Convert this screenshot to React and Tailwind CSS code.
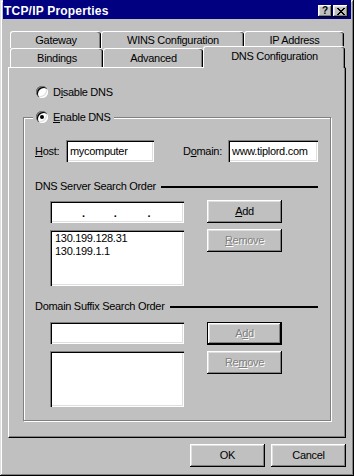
import React from 'react';

const raised = 'shadow-[inset_-1px_-1px_0_#000,inset_1px_1px_0_#fff,inset_-2px_-2px_0_#808080,inset_2px_2px_0_#dfdfdf]';
const sunken = 'shadow-[inset_1px_1px_0_#808080,inset_2px_2px_0_#000,inset_-1px_-1px_0_#fff,inset_-2px_-2px_0_#dfdfdf]';
const grayed = 'text-[#808080] [text-shadow:1px_1px_0_#fff]';

const closeGlyph = ['11000011', '01100110', '00111100', '00011000', '00111100', '01100110', '11000011'];

function CloseGlyph() {
  return (
    <svg width="8" height="7" viewBox="0 0 8 7" shapeRendering="crispEdges">
      {closeGlyph.map((row, y) =>
        row.split('').map((c, x) => (c === '1' ? <rect key={`${x}-${y}`} x={x} y={y} width="1" height="1" fill="#000" /> : null))
      )}
    </svg>
  );
}

function Radio({ checked }) {
  return (
    <span className={`flex items-center justify-center w-[12px] h-[12px] shrink-0 rounded-full bg-white ${sunken}`}>
      {checked && <span className="w-[4px] h-[4px] rounded-full bg-black" />}
    </span>
  );
}

function Button({ children, disabled, isDefault, className = '' }) {
  return (
    <div
      className={`flex items-center justify-center w-[75px] h-[23px] shrink-0 bg-[#c0c0c0] ${raised} ${isDefault ? 'border border-black' : ''} ${disabled ? grayed : 'text-black'} ${className}`}
    >
      {children}
    </div>
  );
}

function Field({ className = '', children }) {
  return <div className={`bg-white shrink-0 ${sunken} ${className}`}>{children}</div>;
}

function Tab({ label, w, selected }) {
  if (selected) {
    return (
      <div
        className="relative z-10 -mt-[2px] h-[22px] flex items-center justify-center pb-[3px] bg-[#c0c0c0] border-l border-t border-white rounded-t-[3px] shadow-[inset_-1px_0_0_#000,inset_-2px_0_0_#808080]"
        style={{ width: w }}
      >
        {label}
      </div>
    );
  }
  return (
    <div
      className="h-full flex items-center justify-center bg-[#c0c0c0] border-l border-t border-white rounded-t-[3px] shadow-[inset_-1px_0_0_#000,inset_-2px_0_0_#808080]"
      style={{ width: w }}
    >
      {label}
    </div>
  );
}

export default function App() {
  return (
    <div className="w-[354px] h-[476px] flex flex-col px-[3px] pb-[3px] bg-[#c0c0c0] text-[11px] leading-[13px] tracking-[-0.3px] text-black font-['Liberation_Sans',Arial,sans-serif] shadow-[inset_-1px_-1px_0_#000,inset_1px_1px_0_#dfdfdf,inset_-2px_-2px_0_#808080,inset_2px_2px_0_#fff] overflow-hidden">
      {/* title bar */}
      <div className="h-[19px] shrink-0 flex items-center bg-[#000080] pl-[1px] pr-[3px] pt-[3px]">
        <span className="text-white font-bold text-[12px] leading-[14px] tracking-[0.2px]">TCP/IP Properties</span>
        <div className="ml-auto flex items-center">
          <div className={`w-[14px] h-[12px] flex items-center justify-center bg-[#c0c0c0] ${raised} text-[10px] font-bold leading-none tracking-normal`}>?</div>
          <div className={`ml-[1px] w-[15px] h-[12px] flex items-center justify-center bg-[#c0c0c0] ${raised}`}>
            <CloseGlyph />
          </div>
        </div>
      </div>

      <div className="flex-1 flex flex-col px-[5px]">
        {/* tabs */}
        <div className="mt-[12px] h-[17px] flex pl-[2px]">
          <Tab label="Gateway" w={91} />
          <Tab label="WINS Configuration" w={143} />
          <Tab label="IP Address" w={100} />
        </div>
        <div className="h-[19px] flex items-start pl-[2px]">
          <Tab label="Bindings" w={93} />
          <Tab label="Advanced" w={100} />
          <Tab label="DNS Configuration" w={142} selected />
        </div>

        {/* tab panel */}
        <div className="h-[371px] shrink-0 flex flex-col border-l border-t border-white border-r border-b border-r-black border-b-black shadow-[inset_-1px_-1px_0_#808080]">
          <div className="mt-[18px] ml-[27px] h-[12px] flex items-center gap-[5px]">
            <Radio />
            <span>
              D<u>i</u>sable DNS
            </span>
          </div>

          <div className="relative mt-[19px] ml-[14px] w-[308px] h-[304px] flex flex-col border border-[#808080] shadow-[1px_1px_0_#fff,inset_1px_1px_0_#fff]">
            <div className="absolute left-[9px] -top-[7px] h-[12px] px-[3px] flex items-center gap-[5px] bg-[#c0c0c0]">
              <Radio checked />
              <span>
                <u>E</u>nable DNS
              </span>
            </div>

            <div className="mt-[22px] pl-[11px] h-[22px] flex items-center">
              <span className="w-[31px]">
                <u>H</u>ost:
              </span>
              <Field className="w-[88px] h-[22px] flex items-center pl-[4px]">mycomputer</Field>
              <span className="ml-[29px] w-[45px]">
                D<u>o</u>main:
              </span>
              <Field className="w-[90px] h-[22px] flex items-center pl-[4px]">www.tiplord.com</Field>
            </div>

            <div className="mt-[18px] pl-[11px] pr-[12px] h-[13px] flex items-center">
              <span>DNS Server Search Order</span>
              <div className="ml-[5px] flex-1 h-[2px] bg-black" />
            </div>

            <div className="mt-[7px] pl-[26px] flex items-start">
              <Field className="mt-[1px] w-[134px] h-[22px] flex items-end font-bold pb-[3px]">
                <span className="ml-[32px]">.</span>
                <span className="ml-[29px]">.</span>
                <span className="ml-[31px]">.</span>
              </Field>
              <Button className="ml-[23px]">
                <span>
                  <u>A</u>dd
                </span>
              </Button>
            </div>

            <div className="mt-[6px] pl-[26px] flex items-start">
              <Field className="mt-[1px] w-[134px] h-[56px] pt-[2px] pl-[5px]">
                <div>130.199.128.31</div>
                <div>130.199.1.1</div>
              </Field>
              <Button className="ml-[23px]" disabled>
                <span>
                  <u>R</u>emove
                </span>
              </Button>
            </div>

            <div className="mt-[14px] pl-[11px] pr-[12px] h-[13px] flex items-center">
              <span>Domain Suffix Search Order</span>
              <div className="ml-[5px] flex-1 h-[2px] bg-black" />
            </div>

            <div className="mt-[9px] pl-[26px] flex items-start">
              <Field className="w-[134px] h-[22px]" />
              <Button className="ml-[23px]" disabled isDefault>
                <span>
                  A<u>d</u>d
                </span>
              </Button>
            </div>

            <div className="mt-[6px] pl-[26px] flex items-start">
              <Field className="w-[134px] h-[56px]" />
              <Button className="ml-[23px]" disabled>
                <span>
                  Re<u>m</u>ove
                </span>
              </Button>
            </div>
          </div>
        </div>

        {/* footer */}
        <div className="mt-[6px] flex justify-end gap-[6px]">
          <Button>OK</Button>
          <Button>Cancel</Button>
        </div>
      </div>
    </div>
  );
}
